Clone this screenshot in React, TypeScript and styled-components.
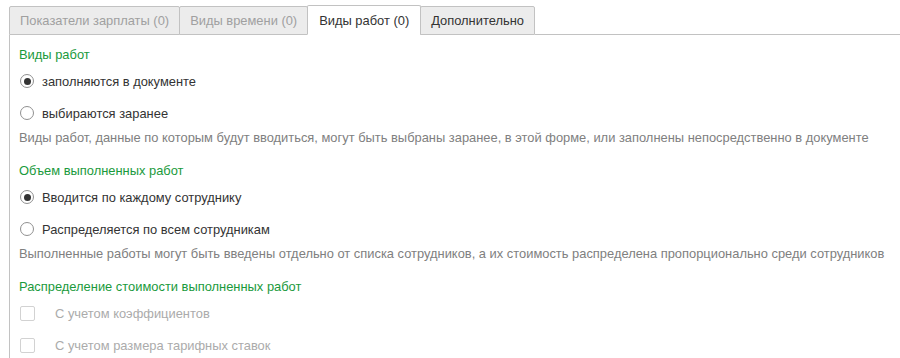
import styled, { createGlobalStyle } from 'styled-components';

const GlobalStyle = createGlobalStyle`
  body {
    margin: 0;
    background: #ffffff;
    font-family: 'Liberation Sans', Arial, sans-serif;
    font-size: 12.9px;
    color: #333333;
  }
`;

const tabs = [
  { title: 'Показатели зарплаты (0)', active: false, muted: true },
  { title: 'Виды времени (0)', active: false, muted: true },
  { title: 'Виды работ (0)', active: true, muted: false },
  { title: 'Дополнительно', active: false, muted: false },
];

function Radio({ checked, label }: { checked: boolean; label: string }) {
  return (
    <OptionRow>
      <RadioCircle>{checked && <RadioDot />}</RadioCircle>
      <span>{label}</span>
    </OptionRow>
  );
}

function Check({ label }: { label: string }) {
  return (
    <CheckRow>
      <CheckBox />
      <span>{label}</span>
    </CheckRow>
  );
}

export default function App() {
  return (
    <>
      <GlobalStyle />
      <Page>
        <TabBar>
          {tabs.map((t) => (
            <Tab key={t.title} active={t.active} muted={t.muted}>
              {t.title}
            </Tab>
          ))}
          <TabFiller />
        </TabBar>
        <Panel>
          <GroupTitle>Виды работ</GroupTitle>
          <Radio checked label="заполняются в документе" />
          <Radio checked={false} label="выбираются заранее" />
          <Hint>
            Виды работ, данные по которым будут вводиться, могут быть выбраны
            заранее, в этой форме, или заполнены непосредственно в документе
          </Hint>

          <GroupTitle>Объем выполненных работ</GroupTitle>
          <Radio checked label="Вводится по каждому сотруднику" />
          <Radio checked={false} label="Распределяется по всем сотрудникам" />
          <Hint>
            Выполненные работы могут быть введены отдельно от списка
            сотрудников, а их стоимость распределена пропорционально среди
            сотрудников
          </Hint>

          <GroupTitle>Распределение стоимости выполненных работ</GroupTitle>
          <Check label="С учетом коэффициентов" />
          <Check label="С учетом размера тарифных ставок" />
        </Panel>
      </Page>
    </>
  );
}

const Page = styled.div`
  padding: 5px 0 0 9px;
  height: 353px;
  overflow: hidden;
`;

const TabBar = styled.div`
  display: flex;
  align-items: flex-end;
  height: 30px;
`;

const Tab = styled.div<{ active: boolean; muted: boolean }>`
  box-sizing: border-box;
  height: ${(p) => (p.active ? '30px' : '29px')};
  padding: 0 ${(p) => (p.active ? '11px' : '10px')};
  display: flex;
  align-items: center;
  border: 1px solid #c2c2c2;
  border-bottom: ${(p) => (p.active ? '1px solid #ffffff' : '1px solid #c2c2c2')};
  border-radius: 2px 2px 0 0;
  margin-left: -1px;
  background: ${(p) => (p.active ? '#ffffff' : '#ececec')};
  color: ${(p) => (p.muted ? '#a0a0a0' : '#333333')};
  white-space: nowrap;
  &:first-child {
    margin-left: 0;
  }
`;

const TabFiller = styled.div`
  flex: 1;
  border-bottom: 1px solid #c2c2c2;
`;

const Panel = styled.div`
  border-left: 1px solid #c2c2c2;
  padding: 12px 0 0 9px;
  display: flex;
  flex-direction: column;
`;

const GroupTitle = styled.div`
  color: #1a9a3c;
  height: 16px;
  line-height: 16px;
  margin-bottom: 2px;
`;

const OptionRow = styled.div`
  display: flex;
  align-items: center;
  gap: 8px;
  height: 32px;
  padding-left: 1px;
  color: #333333;
`;

const RadioCircle = styled.div`
  box-sizing: border-box;
  width: 14px;
  height: 14px;
  border: 1px solid #909090;
  border-radius: 50%;
  display: flex;
  align-items: center;
  justify-content: center;
  background: #ffffff;
`;

const RadioDot = styled.div`
  width: 7px;
  height: 7px;
  border-radius: 50%;
  background: #333333;
`;

const Hint = styled.div`
  color: #808080;
  height: 16px;
  line-height: 16px;
  margin: 1px 0 17px;
  white-space: nowrap;
`;

const CheckRow = styled.div`
  display: flex;
  align-items: center;
  gap: 20px;
  height: 32px;
  padding-left: 1px;
  color: #ababab;
`;

const CheckBox = styled.div`
  box-sizing: border-box;
  width: 15px;
  height: 15px;
  border: 1px solid #d2d2d2;
  border-radius: 2px;
  background: #ffffff;
`;
